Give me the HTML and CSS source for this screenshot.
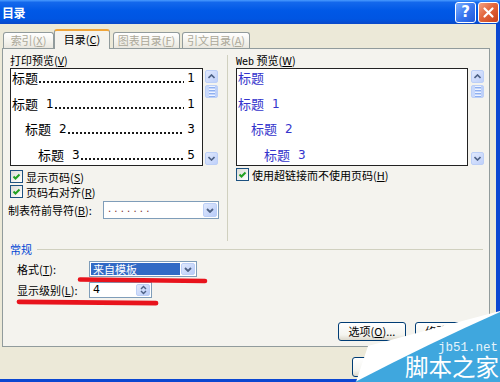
FILE: index.html
```html
<!DOCTYPE html>
<html lang="zh">
<head>
<meta charset="utf-8">
<title>目录</title>
<link rel="stylesheet" href="styles.css">
</head>
<body>
<div class="window">
  <div class="titlebar">
    <span class="title">目录</span>
    <div class="tb-buttons">
      <span class="tb-btn help">?</span>
      <span class="tb-btn close"><svg width="19" height="19" viewBox="0 0 19 19"><path d="M5.5 5.5 L13.5 13.5 M13.5 5.5 L5.5 13.5" stroke="#fff" stroke-width="2.2" stroke-linecap="round"/></svg></span>
    </div>
  </div>
  <div class="client">
    <div class="tabs">
      <div class="tab t1">索引(<u>X</u>)</div>
      <div class="tab t2 active">目录(<u>C</u>)</div>
      <div class="tab t3">图表目录(<u>F</u>)</div>
      <div class="tab t4">引文目录(<u>A</u>)</div>
    </div>
    <div class="panel">
      <div class="top">
        <div class="col-left">
          <div class="label">打印预览(<u>V</u>)</div>
          <div class="preview-row">
            <div class="preview">
              <div class="prow"><span>标题</span><span class="dots"></span><span class="pn">1</span></div>
              <div class="prow"><span>标题</span><span class="hn">1</span><span class="dots"></span><span class="pn">1</span></div>
              <div class="prow i2"><span>标题</span><span class="hn">2</span><span class="dots"></span><span class="pn">3</span></div>
              <div class="prow i3"><span>标题</span><span class="hn">3</span><span class="dots"></span><span class="pn">5</span></div>
            </div>
            <div class="sb">
              <span class="sbtn"><svg width="7" height="5" viewBox="0 0 7 5"><path d="M0.5 4 L3.5 1 L6.5 4" fill="none" stroke="#4d6185" stroke-width="1.6"/></svg></span>
              <span class="thumb"><i></i><i></i><i></i><i></i></span>
              <span class="sbtn down"><svg width="7" height="5" viewBox="0 0 7 5"><path d="M0.5 1 L3.5 4 L6.5 1" fill="none" stroke="#4d6185" stroke-width="1.6"/></svg></span>
            </div>
          </div>
          <div class="check first"><span class="box"><svg width="11" height="11" viewBox="0 0 11 11"><path d="M2.5 5.5 L4.5 7.5 L8.5 3.5" fill="none" stroke="#21a121" stroke-width="2"/></svg></span><span>显示页码(<u>S</u>)</span></div>
          <div class="check"><span class="box"><svg width="11" height="11" viewBox="0 0 11 11"><path d="M2.5 5.5 L4.5 7.5 L8.5 3.5" fill="none" stroke="#21a121" stroke-width="2"/></svg></span><span>页码右对齐(<u>R</u>)</span></div>
          <div class="leader-row">
            <span>制表符前导符(<u>B</u>):</span>
            <div class="combo leader">
              <span class="ltext">. . . . . . .</span>
              <span class="cbtn"><svg width="8" height="5" viewBox="0 0 8 5"><path d="M1 1 L4 4 L7 1" fill="none" stroke="#4d6185" stroke-width="1.8"/></svg></span>
            </div>
          </div>
        </div>
        <div class="vsep"></div>
        <div class="col-right">
          <div class="label"><span class="web">Web</span> 预览(<u>W</u>)</div>
          <div class="preview-row">
            <div class="preview web-preview">
              <div class="prow"><span>标题</span></div>
              <div class="prow"><span>标题</span><span class="hn">1</span></div>
              <div class="prow i2"><span>标题</span><span class="hn">2</span></div>
              <div class="prow i3"><span>标题</span><span class="hn">3</span></div>
            </div>
            <div class="sb wide">
              <span class="sbtn"><svg width="7" height="5" viewBox="0 0 7 5"><path d="M0.5 4 L3.5 1 L6.5 4" fill="none" stroke="#4d6185" stroke-width="1.6"/></svg></span>
              <span class="thumb"><i></i><i></i><i></i><i></i></span>
              <span class="sbtn down"><svg width="7" height="5" viewBox="0 0 7 5"><path d="M0.5 1 L3.5 4 L6.5 1" fill="none" stroke="#4d6185" stroke-width="1.6"/></svg></span>
            </div>
          </div>
          <div class="check right"><span class="box"><svg width="11" height="11" viewBox="0 0 11 11"><path d="M2.5 5.5 L4.5 7.5 L8.5 3.5" fill="none" stroke="#21a121" stroke-width="2"/></svg></span><span>使用超链接而不使用页码(<u>H</u>)</span></div>
        </div>
      </div>
      <div class="group-head"><span class="gtitle">常规</span><span class="gline"></span></div>
      <div class="frow">
        <span class="flabel">格式(<u>T</u>):</span>
        <div class="combo fmt">
          <span class="sel">来自模板</span>
          <span class="cbtn"><svg width="8" height="5" viewBox="0 0 8 5"><path d="M1 1 L4 4 L7 1" fill="none" stroke="#4d6185" stroke-width="1.8"/></svg></span>
        </div>
      </div>
      <div class="frow">
        <span class="flabel">显示级别(<u>L</u>):</span>
        <div class="combo spin">
          <span class="val">4</span>
          <span class="spbtn"><svg width="7" height="12" viewBox="0 0 7 12"><path d="M1 5 L3.5 2.5 L6 5 M1 7 L3.5 9.5 L6 7" fill="none" stroke="#4d6185" stroke-width="1.4"/></svg></span>
        </div>
      </div>
      <div class="panel-buttons">
        <button class="btn">选项(<u>O</u>)...</button>
        <button class="btn">修改(<u>M</u>)...</button>
      </div>
    </div>
    <div class="dlg-buttons">
      <button class="btn dlg">确定</button>
      <button class="btn dlg">取消</button>
    </div>
  </div>
  <svg class="marks" width="500" height="382" viewBox="0 0 500 382">
    <path d="M80 279.5 Q140 280 205 281" fill="none" stroke="#e8131c" stroke-width="4.6" stroke-linecap="round"/>
    <path d="M19 301.8 Q90 302.5 156 303.2" fill="none" stroke="#e8131c" stroke-width="4.8" stroke-linecap="round"/>
  </svg>
  <svg class="wm" width="500" height="382" viewBox="0 0 500 382">
    <polygon points="500,311 368,346 356,382 500,382" fill="#ffffff"/>
    <path d="M500 312 Q432 342 355 382 L500 382 Z" fill="#3fa7de"/>
  </svg>
  <span class="wm-url">jb51.net</span>
  <span class="wm-name">脚本之家</span>
</div>
</body>
</html>
```

FILE: styles.css
```css
html, body {
  margin: 0;
  padding: 0;
}
body {
  font-family: "Noto Sans CJK SC", "Noto Sans", sans-serif;
  font-size: 11px;
  color: #000;
  width: 500px;
  height: 382px;
  overflow: hidden;
}
u {
  text-decoration: underline;
  text-underline-offset: 1px;
}
.window {
  position: relative;
  width: 500px;
  height: 382px;
  background: #0b47d1;
  display: flex;
  flex-direction: column;
  overflow: hidden;
}
.titlebar {
  height: 24px;
  flex: none;
  box-sizing: border-box;
  background: linear-gradient(to bottom, #4a9bff 0%, #1468ec 10%, #0058e6 45%, #0055e2 80%, #0a48c8 100%);
  display: flex;
  align-items: center;
  justify-content: space-between;
  padding: 0 1px 0 2px;
}
.title {
  color: #fff;
  font-weight: bold;
  font-size: 12px;
  letter-spacing: -0.5px;
}
.tb-buttons {
  display: flex;
  gap: 2px;
}
.tb-btn {
  width: 21px;
  height: 21px;
  box-sizing: border-box;
  border: 1px solid #fff;
  border-radius: 3px;
  display: flex;
  align-items: center;
  justify-content: center;
}
.help {
  background: linear-gradient(135deg, #7fb0ff 0%, #3a78f0 50%, #2158da 100%);
  color: #fff;
  font: bold 15px "DejaVu Sans", sans-serif;
}
.close {
  background: linear-gradient(135deg, #f3a283 0%, #e2663c 45%, #c9401a 100%);
}
.client {
  flex: 1;
  margin: 0 4px 3px 0;
  background: #ece9d8;
  padding-top: 5px;
  display: flex;
  flex-direction: column;
}
.tabs {
  display: flex;
  align-items: flex-end;
  padding-left: 3px;
  height: 19px;
  position: relative;
  z-index: 1;
  flex: none;
}
.tab {
  height: 16px;
  box-sizing: border-box;
  border: 1px solid #919b9c;
  border-bottom: none;
  border-radius: 3px 3px 0 0;
  background: linear-gradient(#ffffff, #f3f2ec 60%, #e9e7df);
  color: #aca899;
  display: flex;
  align-items: center;
  justify-content: center;
  line-height: 1;
  white-space: nowrap;
}
.t1 { width: 51px; }
.t2 {
  width: 56px;
  height: 20px;
  margin-bottom: -1px;
  background: #f4f3ee;
  color: #000;
  border-top: 2px solid #f0a53a;
  padding-bottom: 1px;
}
.t3 { width: 67px; margin-left: 3px; }
.t4 { width: 68px; margin-left: 2px; }
.panel {
  margin-left: 2px;
  width: 488px;
  height: 299px;
  flex: none;
  box-sizing: border-box;
  border: 1px solid #919b9c;
  background: #f4f3ee;
  padding: 4px 4px 5px 7px;
  display: flex;
  flex-direction: column;
}
.top {
  display: flex;
  height: 188px;
  flex: none;
}
.col-left {
  width: 209px;
  flex: none;
  display: flex;
  flex-direction: column;
}
.label {
  height: 14px;
  line-height: 14px;
  margin-bottom: 1px;
  white-space: nowrap;
}
.web {
  font-family: "DejaVu Sans Mono", monospace;
  font-size: 10px;
}
.preview-row {
  display: flex;
  height: 98px;
}
.preview {
  width: 193px;
  flex: none;
  box-sizing: border-box;
  border: 1px solid #222;
  background: #fff;
  padding: 0 7px 0 1px;
  overflow: hidden;
  font-size: 13px;
}
.prow {
  display: flex;
  height: 20px;
  line-height: 20px;
  margin-bottom: 5.5px;
  white-space: nowrap;
}
.prow:first-child {
  margin-top: -1px;
}
.i2 { padding-left: 13px; }
.i3 { padding-left: 26px; }
.hn {
  margin-left: 8px;
  font-family: "DejaVu Sans", sans-serif;
  font-size: 12px;
}
.dots {
  flex: 1;
  margin: 0 1px 0 1px;
  background-image: radial-gradient(circle at 1px 1px, #1a1a1a 0.9px, transparent 1.2px);
  background-size: 4px 2px;
  background-repeat: repeat-x;
  background-position: left 0 top 13px;
}
.pn {
  margin-left: 2px;
  font-family: "DejaVu Sans", sans-serif;
  font-size: 12px;
}
.web-preview {
  width: 232px;
  color: #3434cc;
}
.sb {
  width: 13px;
  margin-left: 2px;
  display: flex;
  flex-direction: column;
  padding: 2px 0 1px;
  box-sizing: border-box;
  flex: none;
}
.sb.wide {
  margin-left: 3px;
}
.sbtn {
  height: 13px;
  box-sizing: border-box;
  border: 1px solid #bccff7;
  border-radius: 2px;
  background: linear-gradient(135deg, #e0e9fd, #bfd0fa);
  display: flex;
  align-items: center;
  justify-content: center;
}
.sbtn.down {
  margin-top: auto;
}
.thumb {
  height: 13px;
  margin-top: 2px;
  box-sizing: border-box;
  border: 1px solid #bccff7;
  border-radius: 2px;
  background: linear-gradient(90deg, #cadafc, #bccff9);
  display: flex;
  flex-direction: column;
  align-items: center;
  justify-content: center;
  gap: 1px;
}
.thumb i {
  display: block;
  width: 6px;
  height: 1px;
  background: #eef3ff;
  border-bottom: 1px solid #8fb0f0;
}
.check {
  display: flex;
  align-items: center;
  height: 15px;
  gap: 3px;
  white-space: nowrap;
}
.check.first {
  margin-top: 3px;
}
.check.right {
  margin-top: 1px;
}
.box {
  width: 13px;
  height: 13px;
  flex: none;
  box-sizing: border-box;
  border: 1px solid #1c5180;
  background: linear-gradient(135deg, #dcdcd7, #ffffff);
  display: flex;
  align-items: center;
  justify-content: center;
}
.leader-row {
  display: flex;
  align-items: center;
  height: 18px;
  margin-top: 2px;
  margin-left: -2px;
  white-space: nowrap;
}
.combo {
  box-sizing: border-box;
  border: 1px solid #7f9db9;
  background: #fff;
  display: flex;
  align-items: stretch;
  padding: 1px;
}
.leader {
  margin-left: auto;
  width: 116px;
  height: 18px;
}
.ltext {
  flex: 1;
  padding-left: 3px;
  color: #7a2c2c;
  line-height: 12px;
  font-family: "DejaVu Sans", sans-serif;
  font-size: 10px;
}
.cbtn {
  width: 14px;
  flex: none;
  box-sizing: border-box;
  border: 1px solid #bccff7;
  border-radius: 2px;
  background: linear-gradient(135deg, #e0e9fd, #b9ccf8);
  display: flex;
  align-items: center;
  justify-content: center;
}
.vsep {
  width: 1px;
  height: 186px;
  margin: 2px 0 0 8px;
  background: #d0d0bf;
  flex: none;
}
.col-right {
  width: 249px;
  margin-left: 8px;
  flex: none;
  display: flex;
  flex-direction: column;
}
.group-head {
  display: flex;
  align-items: center;
  height: 14px;
  margin-top: 1px;
}
.gtitle {
  color: #0046d5;
}
.gline {
  flex: 1;
  height: 1px;
  background: #d0d0bf;
  margin: 0 2px 0 5px;
}
.frow {
  display: flex;
  align-items: center;
  height: 16px;
  margin-top: 5px;
  padding-left: 7px;
  white-space: nowrap;
}
.flabel {
  width: 72px;
  flex: none;
}
.fmt {
  width: 108px;
  height: 16px;
}
.sel {
  flex: 1;
  background: #316ac5;
  color: #fff;
  padding-left: 2px;
  margin-right: 1px;
  line-height: 12px;
  font-size: 11px;
}
.spin {
  width: 63px;
  height: 16px;
}
.val {
  flex: 1;
  padding-left: 2px;
  line-height: 12px;
  font-family: "DejaVu Sans", sans-serif;
  font-size: 11px;
}
.spbtn {
  width: 14px;
  flex: none;
  box-sizing: border-box;
  border: 1px solid #bccff7;
  border-radius: 2px;
  background: linear-gradient(135deg, #e0e9fd, #b9ccf8);
  display: flex;
  align-items: center;
  justify-content: center;
}
.panel-buttons {
  margin-top: auto;
  display: flex;
  justify-content: flex-end;
  gap: 9px;
  padding-right: 2px;
}
.btn {
  width: 68px;
  height: 19px;
  box-sizing: border-box;
  border: 1px solid #003c74;
  border-radius: 3px;
  background: linear-gradient(#ffffff, #f4f4ef 70%, #dcd8cc);
  font-family: "Noto Sans CJK SC", sans-serif;
  font-size: 11px;
  color: #000;
  padding: 0;
  line-height: 1;
}
.dlg-buttons {
  display: flex;
  justify-content: flex-end;
  gap: 4px;
  margin-top: 10px;
  padding-right: 2px;
}
.btn.dlg {
  width: 69px;
  height: 20px;
}
.marks, .wm {
  position: absolute;
  left: 0;
  top: 0;
  pointer-events: none;
}
.wm-url {
  position: absolute;
  left: 438px;
  top: 342px;
  font-family: "Liberation Mono", monospace;
  font-size: 12.5px;
  line-height: 1;
  color: #e4f3fb;
}
.wm-name {
  position: absolute;
  left: 405px;
  top: 355px;
  font-size: 23.5px;
  line-height: 1;
  color: #fff;
  white-space: nowrap;
}
```
